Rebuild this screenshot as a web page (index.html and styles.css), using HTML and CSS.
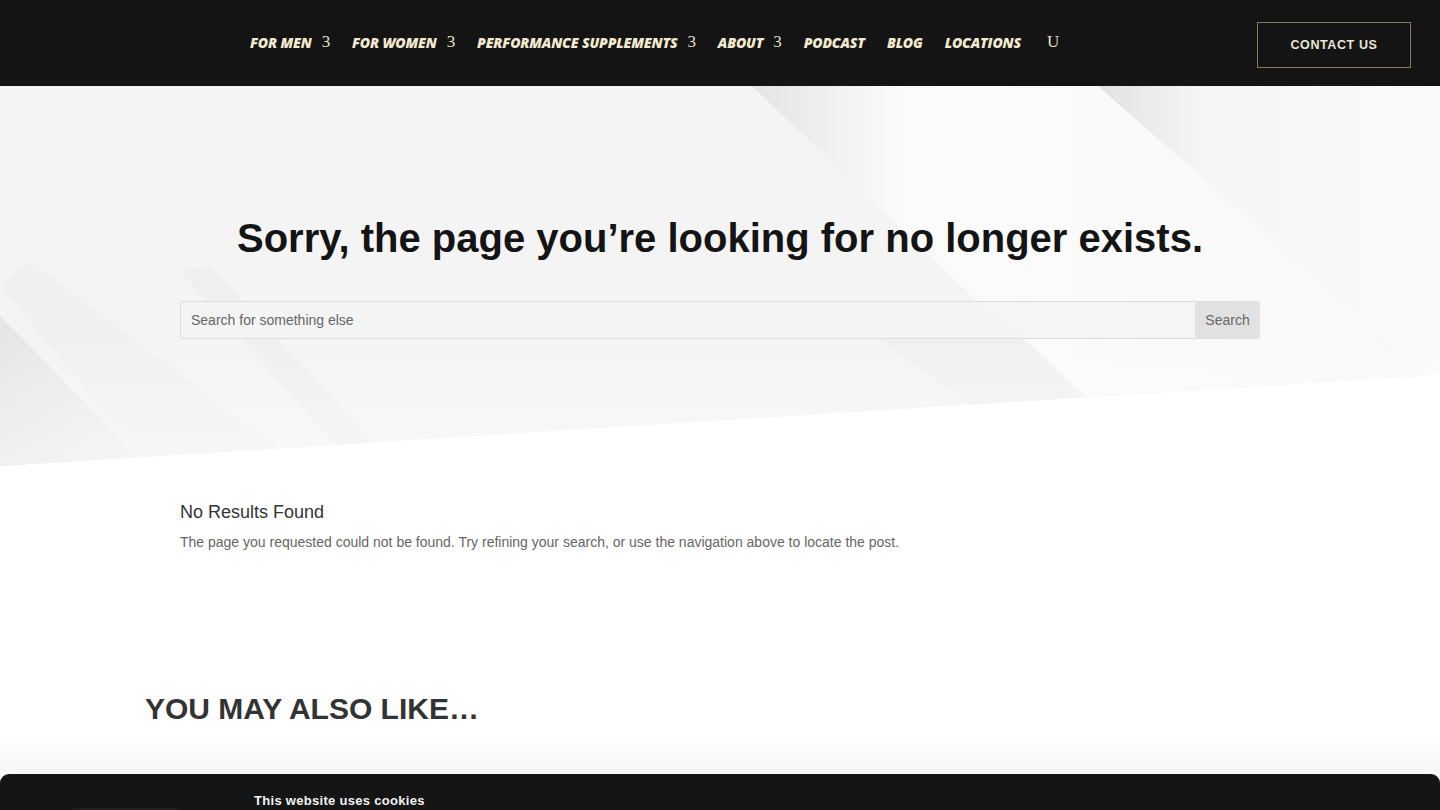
FILE: index.html
```html
<!DOCTYPE html>
<html lang="en">
<head>
<meta charset="utf-8">
<title>Page not found</title>
<link rel="stylesheet" href="styles.css">
</head>
<body>
<header class="site-header">
  <nav class="main-nav">
    <a class="nav-item" href="#">FOR MEN<span class="caret">3</span></a>
    <a class="nav-item" href="#">FOR WOMEN<span class="caret">3</span></a>
    <a class="nav-item" href="#">PERFORMANCE SUPPLEMENTS<span class="caret">3</span></a>
    <a class="nav-item" href="#">ABOUT<span class="caret">3</span></a>
    <a class="nav-item" href="#">PODCAST</a>
    <a class="nav-item" href="#">BLOG</a>
    <a class="nav-item" href="#">LOCATIONS</a>
    <span class="nav-search">U</span>
  </nav>
  <a class="contact-btn" href="#">CONTACT US</a>
</header>

<section class="hero">
  <svg class="hero-bg" viewBox="0 0 1440 380" preserveAspectRatio="none" aria-hidden="true">
    <defs>
      <linearGradient id="bandA" x1="0" y1="0" x2="1" y2="0">
        <stop offset="0" stop-color="#e4e4e4"/>
        <stop offset="0.22" stop-color="#fbfbfb"/>
        <stop offset="1" stop-color="#f8f8f8"/>
      </linearGradient>
      <linearGradient id="bandB" x1="0" y1="0" x2="1" y2="0">
        <stop offset="0" stop-color="#e2e2e2"/>
        <stop offset="0.3" stop-color="#f5f5f5"/>
        <stop offset="1" stop-color="#fafafa"/>
      </linearGradient>
      <linearGradient id="bandC" x1="0" y1="0" x2="1" y2="0">
        <stop offset="0" stop-color="#e6e6e6"/>
        <stop offset="1" stop-color="#efefef"/>
      </linearGradient>
      <linearGradient id="fadeBottom" x1="0" y1="0" x2="0" y2="1">
        <stop offset="0" stop-color="#ffffff" stop-opacity="0"/>
        <stop offset="1" stop-color="#ffffff" stop-opacity="0.45"/>
      </linearGradient>
    </defs>
    <rect width="1440" height="380" fill="#f4f4f4"/>
    <!-- wide light streak -->
    <polygon points="752,0 1098,0 1440,300 1440,380 1150,380" fill="url(#bandA)"/>
    <!-- far right streak -->
    <polygon points="1098,0 1440,0 1440,300" fill="url(#bandB)"/>
    <!-- lower left streaks -->
    <polygon points="0,230 0,380 148,380" fill="url(#bandC)"/>
    <polygon points="0,200 30,175 300,380 150,380" fill="#efefef" opacity="0.8"/>
    <polygon points="180,185 210,180 395,380 355,380" fill="#ebebeb" opacity="0.6"/>
    <polygon points="860,240 1000,230 1160,380 1060,380" fill="#ededed" opacity="0.6"/>
    <rect x="0" y="250" width="1440" height="130" fill="url(#fadeBottom)"/>
  </svg>
  <div class="hero-inner">
    <h1 class="hero-title">Sorry, the page you’re looking for no longer exists.</h1>
    <form class="search-form">
      <input class="search-input" type="text" placeholder="Search for something else">
      <button class="search-btn" type="button">Search</button>
    </form>
  </div>
</section>

<section class="results">
  <h2 class="results-title">No Results Found</h2>
  <p class="results-text">The page you requested could not be found. Try refining your search, or use the navigation above to locate the post.</p>
</section>

<section class="related">
  <h2 class="related-title">YOU MAY ALSO LIKE…</h2>
</section>

<div class="cookie-bar">
  <div class="cookie-logo"></div>
  <p class="cookie-title">This website uses cookies</p>
</div>
</body>
</html>
```

FILE: styles.css
```css
* { box-sizing: border-box; }

html, body {
  margin: 0;
  padding: 0;
  background: #ffffff;
  font-family: "Liberation Sans", Arial, sans-serif;
  overflow: hidden;
}

/* ---------- header ---------- */
.site-header {
  height: 86px;
  background: #141414;
  display: flex;
  align-items: center;
  padding: 0 29px 0 250px;
}

.main-nav {
  display: flex;
  align-items: center;
  gap: 22px;
  flex: 1;
  margin-top: -2px;
}

.nav-item {
  display: flex;
  align-items: center;
  font-family: "Open Sans", sans-serif;
  font-weight: 800;
  font-style: italic;
  font-size: 14px;
  letter-spacing: -0.15px;
  color: #f3ead0;
  text-decoration: none;
}

.caret,
.nav-search {
  font-family: "Liberation Serif", "Times New Roman", serif;
  font-style: normal;
  font-weight: 400;
  font-size: 17px;
  color: #e8dfc4;
}

.caret { margin-left: 10px; }

.nav-search { margin-left: 4px; }

.contact-btn {
  width: 154px;
  height: 46px;
  margin-top: 4px;
  border: 1px solid #857a5e;
  display: flex;
  align-items: center;
  justify-content: center;
  color: #ece6d3;
  font-family: "Liberation Sans", Arial, sans-serif;
  font-weight: 700;
  font-size: 12.5px;
  letter-spacing: 0.6px;
  text-decoration: none;
}

/* ---------- hero ---------- */
.hero {
  position: relative;
  height: 380px;
  clip-path: polygon(0 0, 100% 0, 100% 76%, 0 100%);
}

.hero-bg {
  position: absolute;
  inset: 0;
  width: 100%;
  height: 100%;
  z-index: 0;
}

.hero-inner {
  position: relative;
  z-index: 1;
  padding: 128px 180px 0;
  display: flex;
  flex-direction: column;
  align-items: center;
}

.hero-title {
  margin: 0;
  font-family: "Liberation Sans", Arial, sans-serif;
  font-weight: 700;
  font-size: 40px;
  line-height: 48px;
  color: #141414;
  text-align: center;
}

.search-form {
  margin-top: 39px;
  width: 100%;
  display: flex;
  height: 38px;
}

.search-input {
  flex: 1;
  height: 38px;
  border: 1px solid #dcdcdc;
  border-right: none;
  border-radius: 3px 0 0 3px;
  background: rgba(244, 244, 244, 0.9);
  padding: 0 10px;
  font-family: "Liberation Sans", Arial, sans-serif;
  font-size: 14px;
  color: #666;
  outline: none;
}

.search-input::placeholder { color: #666; }

.search-btn {
  width: 65px;
  height: 38px;
  border: none;
  border-radius: 0 3px 3px 0;
  background: #e1e1e1;
  color: #666;
  font-family: "Liberation Sans", Arial, sans-serif;
  font-size: 14px;
  padding: 0;
}

/* ---------- results ---------- */
.results {
  padding: 34px 180px 0;
}

.results-title {
  margin: 0;
  font-weight: 400;
  font-size: 18px;
  line-height: 24px;
  color: #333;
}

.results-text {
  margin: 8px 0 0;
  font-size: 14px;
  line-height: 20px;
  color: #666;
}

/* ---------- related ---------- */
.related {
  margin-top: 139px;
  padding: 0 145px;
  height: 120px;
  background: linear-gradient(#ffffff 0, #ffffff 45px, #f3f3f3 100px);
}

.related-title {
  margin: 0;
  font-family: "Liberation Sans", Arial, sans-serif;
  font-weight: 700;
  font-size: 30px;
  line-height: 36px;
  color: #333;
}

/* ---------- cookie notice ---------- */
.cookie-bar {
  position: fixed;
  left: 0;
  right: 0;
  top: 774px;
  height: 200px;
  background: #151515;
  border-radius: 9px 9px 0 0;
  display: flex;
  align-items: flex-start;
  padding: 19px 0 0 72px;
}

.cookie-logo {
  width: 106px;
  height: 40px;
  margin-top: 15px;
  background: #202020;
  border-radius: 3px;
}

.cookie-title {
  margin: 0 0 0 76px;
  font-size: 13px;
  font-weight: 700;
  letter-spacing: 0.3px;
  color: #f2f2f2;
}
```
